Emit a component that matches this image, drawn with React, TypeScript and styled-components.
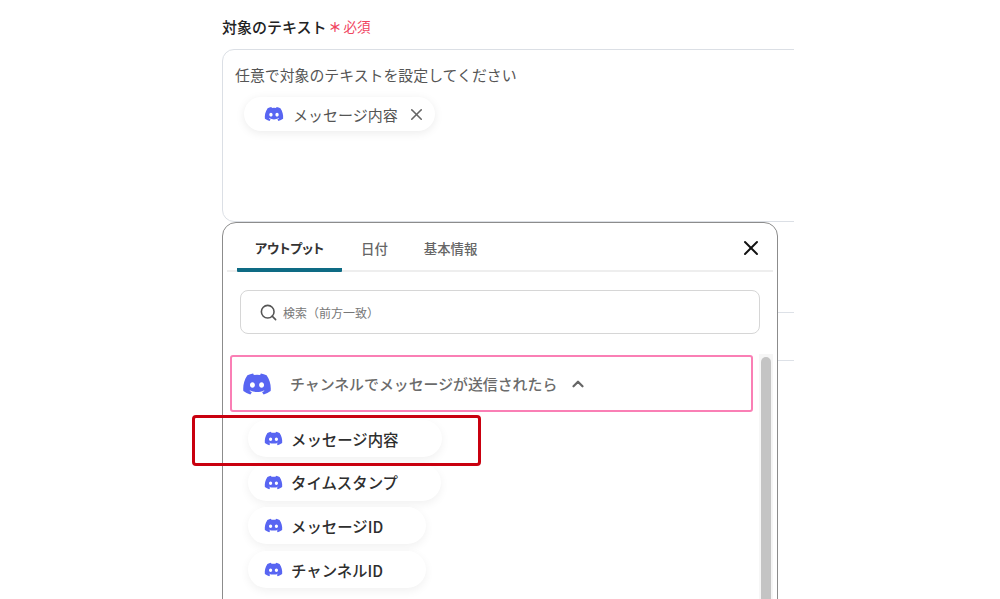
import React from 'react';
import styled, { createGlobalStyle } from 'styled-components';
import { FaDiscord } from 'react-icons/fa6';
import { FiSearch, FiX, FiChevronUp } from 'react-icons/fi';

const GlobalStyle = createGlobalStyle`
  html, body {
    margin: 0;
    padding: 0;
    background: #fff;
    overflow: hidden;
  }
  * {
    box-sizing: border-box;
  }
  body {
    font-family: 'Noto Sans CJK JP', 'Noto Sans', sans-serif;
  }
`;

const Page = styled.div`
  position: relative;
  width: 1000px;
  height: 599px;
  overflow: hidden;
  background: #fff;
  padding-left: 222px;
`;

const Form = styled.div`
  width: 572px;
  height: 599px;
  padding-top: 15px;
  overflow: hidden;
`;

const LabelRow = styled.div`
  display: flex;
  align-items: center;
  height: 22px;
`;

const LabelText = styled.span`
  font-size: 15px;
  font-weight: 500;
  color: #222;
`;

const Asterisk = styled.span`
  margin-left: 2px;
  font-size: 13px;
  font-weight: 700;
  color: #f0455f;
`;

const Required = styled.span`
  margin-left: 2px;
  font-size: 13.5px;
  color: #f0455f;
`;

const TextBox = styled.div`
  width: 640px;
  height: 173px;
  margin-top: 12px;
  padding: 15px 12px;
  border: 1px solid #dbdfe5;
  border-radius: 12px;
`;

const Hint = styled.div`
  font-size: 14.9px;
  line-height: 20px;
  color: #555;
`;

const SelectedChip = styled.div`
  display: inline-flex;
  align-items: center;
  height: 34px;
  margin: 12px 0 0 9px;
  padding: 0 9px 0 20px;
  border-radius: 17px;
  background: #fff;
  box-shadow: 0 2px 10px rgba(0, 0, 0, 0.08);
  color: #555;
  font-size: 15px;
`;

const ChipIcon = styled(FaDiscord)<{ $size: number; $gap: number }>`
  width: ${(p) => p.$size}px;
  height: ${(p) => p.$size}px;
  margin-right: ${(p) => p.$gap}px;
  color: #5865f2;
  flex-shrink: 0;
`;

const RemoveIcon = styled(FiX)`
  width: 19px;
  height: 19px;
  margin-left: 9px;
  color: #666;
`;

const BackgroundLine = styled.div<{ $top: number }>`
  width: 640px;
  height: 1px;
  margin-top: ${(p) => p.$top}px;
  background: #dde1e7;
`;

const Popup = styled.div`
  position: absolute;
  top: 222px;
  left: 222px;
  width: 556px;
  height: 400px;
  background: #fff;
  border: 1px solid #8c8c8c;
  border-radius: 14px;
`;

const TabBar = styled.div`
  position: relative;
  display: flex;
  align-items: stretch;
  height: 49px;
  margin: 0 4px;
  padding-left: 10px;
  border-bottom: 2px solid #eeeeee;
`;

const Tab = styled.div<{ $active?: boolean }>`
  display: flex;
  align-items: center;
  justify-content: center;
  width: ${(p) => (p.$active ? '105px' : 'auto')};
  margin-right: ${(p) => (p.$active ? '19px' : '36px')};
  padding-top: 3px;
  font-size: ${(p) => (p.$active ? '13px' : '13.4px')};
  font-feature-settings: ${(p) => (p.$active ? "'palt'" : 'normal')};
  font-weight: ${(p) => (p.$active ? 700 : 500)};
  color: ${(p) => (p.$active ? '#333' : '#666')};
  border-bottom: ${(p) => (p.$active ? '4px solid #0e6b84' : 'none')};
  border-radius: 0 0 1px 1px;
  height: ${(p) => (p.$active ? '49px' : 'auto')};
`;

const CloseButton = styled.div`
  position: absolute;
  top: 13px;
  right: 10px;
  display: flex;
  color: #111;
`;

const SearchBox = styled.div`
  display: flex;
  align-items: center;
  width: 520px;
  height: 44px;
  margin: 18px 0 0 17px;
  padding-left: 18px;
  border: 1px solid #d6d6d6;
  border-radius: 8px;
  color: #777;
  font-size: 12px;
`;

const SearchIcon = styled(FiSearch)`
  width: 19px;
  height: 19px;
  margin-right: 5px;
  color: #555;
`;

const ListArea = styled.div`
  display: flex;
  margin-top: 21px;
  padding-left: 7px;
`;

const List = styled.div`
  width: 523px;
`;

const GroupHeader = styled.div`
  display: flex;
  align-items: center;
  width: 523px;
  height: 57px;
  padding-left: 10px;
  border: 2px solid #fa7fb5;
  border-radius: 3px;
  font-size: 14.9px;
  font-weight: 500;
  color: #6b6b6b;
`;

const ChevronIcon = styled(FiChevronUp)`
  width: 18px;
  height: 18px;
  margin-left: 12px;
  color: #666;
  stroke-width: 3;
`;

const Outputs = styled.div`
  display: flex;
  flex-direction: column;
  align-items: flex-start;
  gap: 6.7px;
  margin: 8px 0 0 18px;
`;

const OutputChip = styled.div<{ $width: number }>`
  display: flex;
  align-items: center;
  width: ${(p) => p.$width}px;
  height: 37px;
  padding-left: 16px;
  border-radius: 19px;
  background: #fff;
  box-shadow: 0 3px 10px rgba(0, 0, 0, 0.06);
  color: #2e2e2e;
  font-size: 15.4px;
  font-weight: 500;
`;

const Scrollbar = styled.div`
  width: 14px;
  height: 300px;
  margin-left: 6px;
  margin-top: -1px;
  padding: 3px 2px 0;
  background: #f6f6f6;
`;

const ScrollThumb = styled.div`
  height: 100%;
  border-radius: 5px;
  background: #c4c4c4;
`;

const Highlight = styled.div`
  position: absolute;
  top: 415px;
  left: 192px;
  width: 289px;
  height: 51px;
  border: 3.5px solid #c9000f;
  border-radius: 4px;
  pointer-events: none;
`;

const outputs = [
  { label: 'メッセージ内容', width: 194 },
  { label: 'タイムスタンプ', width: 193 },
  { label: 'メッセージID', width: 178 },
  { label: 'チャンネルID', width: 178 },
];

function App() {
  return (
    <Page>
      <GlobalStyle />
      <Form>
        <LabelRow>
          <LabelText>対象のテキスト</LabelText>
          <Asterisk>＊</Asterisk>
          <Required>必須</Required>
        </LabelRow>
        <TextBox>
          <Hint>任意で対象のテキストを設定してください</Hint>
          <SelectedChip>
            <ChipIcon $size={20} $gap={9} />
            メッセージ内容
            <RemoveIcon />
          </SelectedChip>
        </TextBox>
        <BackgroundLine $top={90} />
        <BackgroundLine $top={47} />
      </Form>
      <Popup>
        <TabBar>
          <Tab $active>アウトプット</Tab>
          <Tab>日付</Tab>
          <Tab>基本情報</Tab>
          <CloseButton>
            <FiX size={24} />
          </CloseButton>
        </TabBar>
        <SearchBox>
          <SearchIcon />
          検索（前方一致）
        </SearchBox>
        <ListArea>
          <List>
            <GroupHeader>
              <ChipIcon $size={30} $gap={18} />
              チャンネルでメッセージが送信されたら
              <ChevronIcon />
            </GroupHeader>
            <Outputs>
              {outputs.map((o) => (
                <OutputChip key={o.label} $width={o.width}>
                  <ChipIcon $size={19} $gap={8} />
                  {o.label}
                </OutputChip>
              ))}
            </Outputs>
          </List>
          <Scrollbar>
            <ScrollThumb />
          </Scrollbar>
        </ListArea>
      </Popup>
      <Highlight />
    </Page>
  );
}

export default App;
